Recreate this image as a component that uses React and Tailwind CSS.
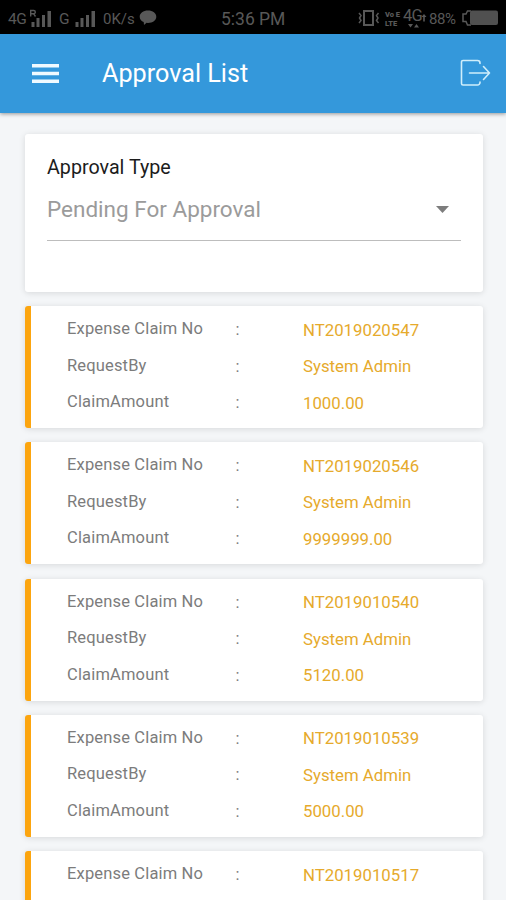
import React from 'react';

const claims = [
  { claimNo: 'NT2019020547', requestBy: 'System Admin', amount: '1000.00' },
  { claimNo: 'NT2019020546', requestBy: 'System Admin', amount: '9999999.00' },
  { claimNo: 'NT2019010540', requestBy: 'System Admin', amount: '5120.00' },
  { claimNo: 'NT2019010539', requestBy: 'System Admin', amount: '5000.00' },
  { claimNo: 'NT2019010517' },
];

function SignalBars({ roaming }) {
  return (
    <svg className="h-[20px] w-[22px] shrink-0" viewBox="0 0 22 20" fill="currentColor">
      <rect x="1.5" y="13" width="3" height="5" />
      <rect x="6.5" y="9" width="3" height="9" />
      <rect x="12" y="6" width="3" height="12" />
      <rect x="17.5" y="2" width="3.5" height="16" />
      {roaming && <path d="M.7 7.5V1.5h3a1.6 1.6 0 0 1 0 3.2H.7M3.5 4.7l2 2.8" fill="none" stroke="currentColor" strokeWidth="1.4" />}
    </svg>
  );
}

function StatusBar() {
  return (
    <div className="flex h-[34px] shrink-0 items-center bg-black pt-[3px] pr-[7px] pl-2 text-[#585858]">
      <div className="flex w-[213px] items-center text-[15.5px] leading-5">
        <span className="w-[22px] tracking-tight">4G</span>
        <SignalBars roaming />
        <span className="ml-[7px] w-[15px]">G</span>
        <SignalBars />
        <span className="ml-[7px] w-[36px] text-[15px]">0K/s</span>
        <svg className="-mt-px h-[16px] w-[18px] shrink-0" viewBox="0 0 18 16" fill="currentColor">
          <path d="M9 0.5c4.7 0 8.3 2.7 8.3 6.2S13.7 12.9 9 12.9l-1.4-.1L5 15.1l-.3-3C2.3 11 .7 9 .7 6.7.7 3.2 4.3.5 9 .5Z" />
        </svg>
      </div>
      <span className="text-[17.5px] leading-5">5:36 PM</span>
      <div className="ml-auto flex items-center">
        {/* vibrate */}
        <svg className="-mt-px h-[16px] w-[22px]" viewBox="0 0 22 16" fill="none" stroke="currentColor" strokeWidth="1.5">
          <rect x="6" y="1" width="9" height="14" strokeWidth="2" />
          <path d="M1 3l2 2.5L1.5 8 3 10.5 1 13M20.5 3l-2 2.5L20 8l-1.5 2.5 2 2.5" />
        </svg>
        <div className="ml-[5px] flex w-[18px] flex-col text-[7.5px] font-black leading-[9px]">
          <span className="whitespace-nowrap">Vo E</span>
          <span>LTE</span>
        </div>
        <div className="relative flex h-5 w-[26px] items-start">
          <span className="-mt-[3px] text-[16.5px] leading-5 tracking-tighter">4G</span>
          <svg className="absolute top-0 left-0 h-5 w-[25px]" viewBox="0 0 25 20" fill="currentColor">
            <path d="M18.500 8l2.500-3 2.500 3h-1.700v4.500h-1.600V8ZM5 15h5l-2.500 3.500ZM11 18.500h5L13.500 15Z" />
          </svg>
        </div>
        <span className="w-[32px] text-[15px] leading-5 tracking-tight">88%</span>
        {/* battery */}
        <svg className="-mt-px h-[16px] w-[38px]" viewBox="0 0 38 16">
          <path d="M10 1H6.5L5 4H2v7.5h3L6.5 15H10" fill="none" stroke="currentColor" strokeWidth="1.5" />
          <rect x="9" y="0.5" width="28" height="14.5" rx="2" fill="#505050" />
        </svg>
      </div>
    </div>
  );
}

function Header() {
  return (
    <header className="z-10 flex h-[79px] shrink-0 items-center bg-[#3498db] pr-[15px] pl-8 text-white shadow-[0_1px_4px_rgba(0,0,0,0.4)]">
      <button type="button" aria-label="Menu">
        <svg className="h-[19px] w-[27px]" viewBox="0 0 27 19" fill="#f0faff">
          <path d="M0 0h27v3.600H0zM0 7.700h27v3.600H0zM0 15.400h27V19H0z" />
        </svg>
      </button>
      <h1 className="ml-[43px] text-[25.2px] leading-8">Approval List</h1>
      <button type="button" className="-mt-px ml-auto" aria-label="Log out">
        <svg className="h-[28px] w-[31px]" viewBox="0 0 31 28" fill="none" stroke="#d0eefb" strokeWidth="1.6" strokeLinecap="round" strokeLinejoin="round">
          <path d="M20 4.5V4a2.5 2.5 0 0 0-2.5-2.500H3A1.5 1.5 0 0 0 1.5 3v21.500A1.5 1.5 0 0 0 3 26h14.500a2.500 2.500 0 0 0 2.500-2.500V23" />
          <path d="M9.5 14h20M23.500 7.500l6 6.500-6 6.500" />
        </svg>
      </button>
    </header>
  );
}

function ApprovalType() {
  return (
    <section className="h-[158px] rounded-[3px] bg-white px-[22px] pt-[22px] shadow-[0_1px_6px_rgba(0,0,0,0.12)]">
      <h2 className="text-[19.7px] leading-6 text-[#1c1c1c]">Approval Type</h2>
      <div className="mt-[9px] flex h-[52px] items-start justify-between border-b border-[#bdbdbd] pt-[6px] pr-3">
        <span className="text-[22.5px] leading-7 text-[#9b9b9b]">Pending For Approval</span>
        <svg className="mt-[11px] h-[7px] w-[13px]" viewBox="0 0 13 7" fill="#7d7d7d">
          <path d="M0 0h13L6.5 7Z" />
        </svg>
      </div>
    </section>
  );
}

function ClaimRow({ label, value }) {
  return (
    <div className="flex h-[36.5px] items-start">
      <span className="w-[168.5px] text-[16.5px] leading-5 tracking-[0.16px] text-[#7c7c7c]">{label}</span>
      <span className="w-[67.5px] pt-px text-[16.5px] leading-5 text-[#7c7c7c]">:</span>
      <span className="pt-[0.5px] text-[16.8px] leading-5 text-[#e6aa2c]">{value}</span>
    </div>
  );
}

function ClaimCard({ claim }) {
  return (
    <article className="h-[122px] shrink-0 rounded-[3px] border-l-[6px] border-[#fca50f] bg-white pt-[13px] pl-9 shadow-[0_1px_6px_rgba(0,0,0,0.12)]">
      <ClaimRow label="Expense Claim No" value={claim.claimNo} />
      {claim.requestBy && <ClaimRow label="RequestBy" value={claim.requestBy} />}
      {claim.amount && <ClaimRow label="ClaimAmount" value={claim.amount} />}
    </article>
  );
}

export default function App() {
  return (
    <div className="flex h-[900px] w-[506px] flex-col overflow-hidden bg-[#f4f6f8] font-[Roboto,sans-serif]">
      <StatusBar />
      <Header />
      <main className="min-h-0 flex-1 overflow-hidden pt-[21px] pr-[23px] pl-[25px]">
        <ApprovalType />
        <div className="mt-[14px] flex flex-col gap-[14.3px]">
          {claims.map((claim) => (
            <ClaimCard key={claim.claimNo} claim={claim} />
          ))}
        </div>
      </main>
    </div>
  );
}
